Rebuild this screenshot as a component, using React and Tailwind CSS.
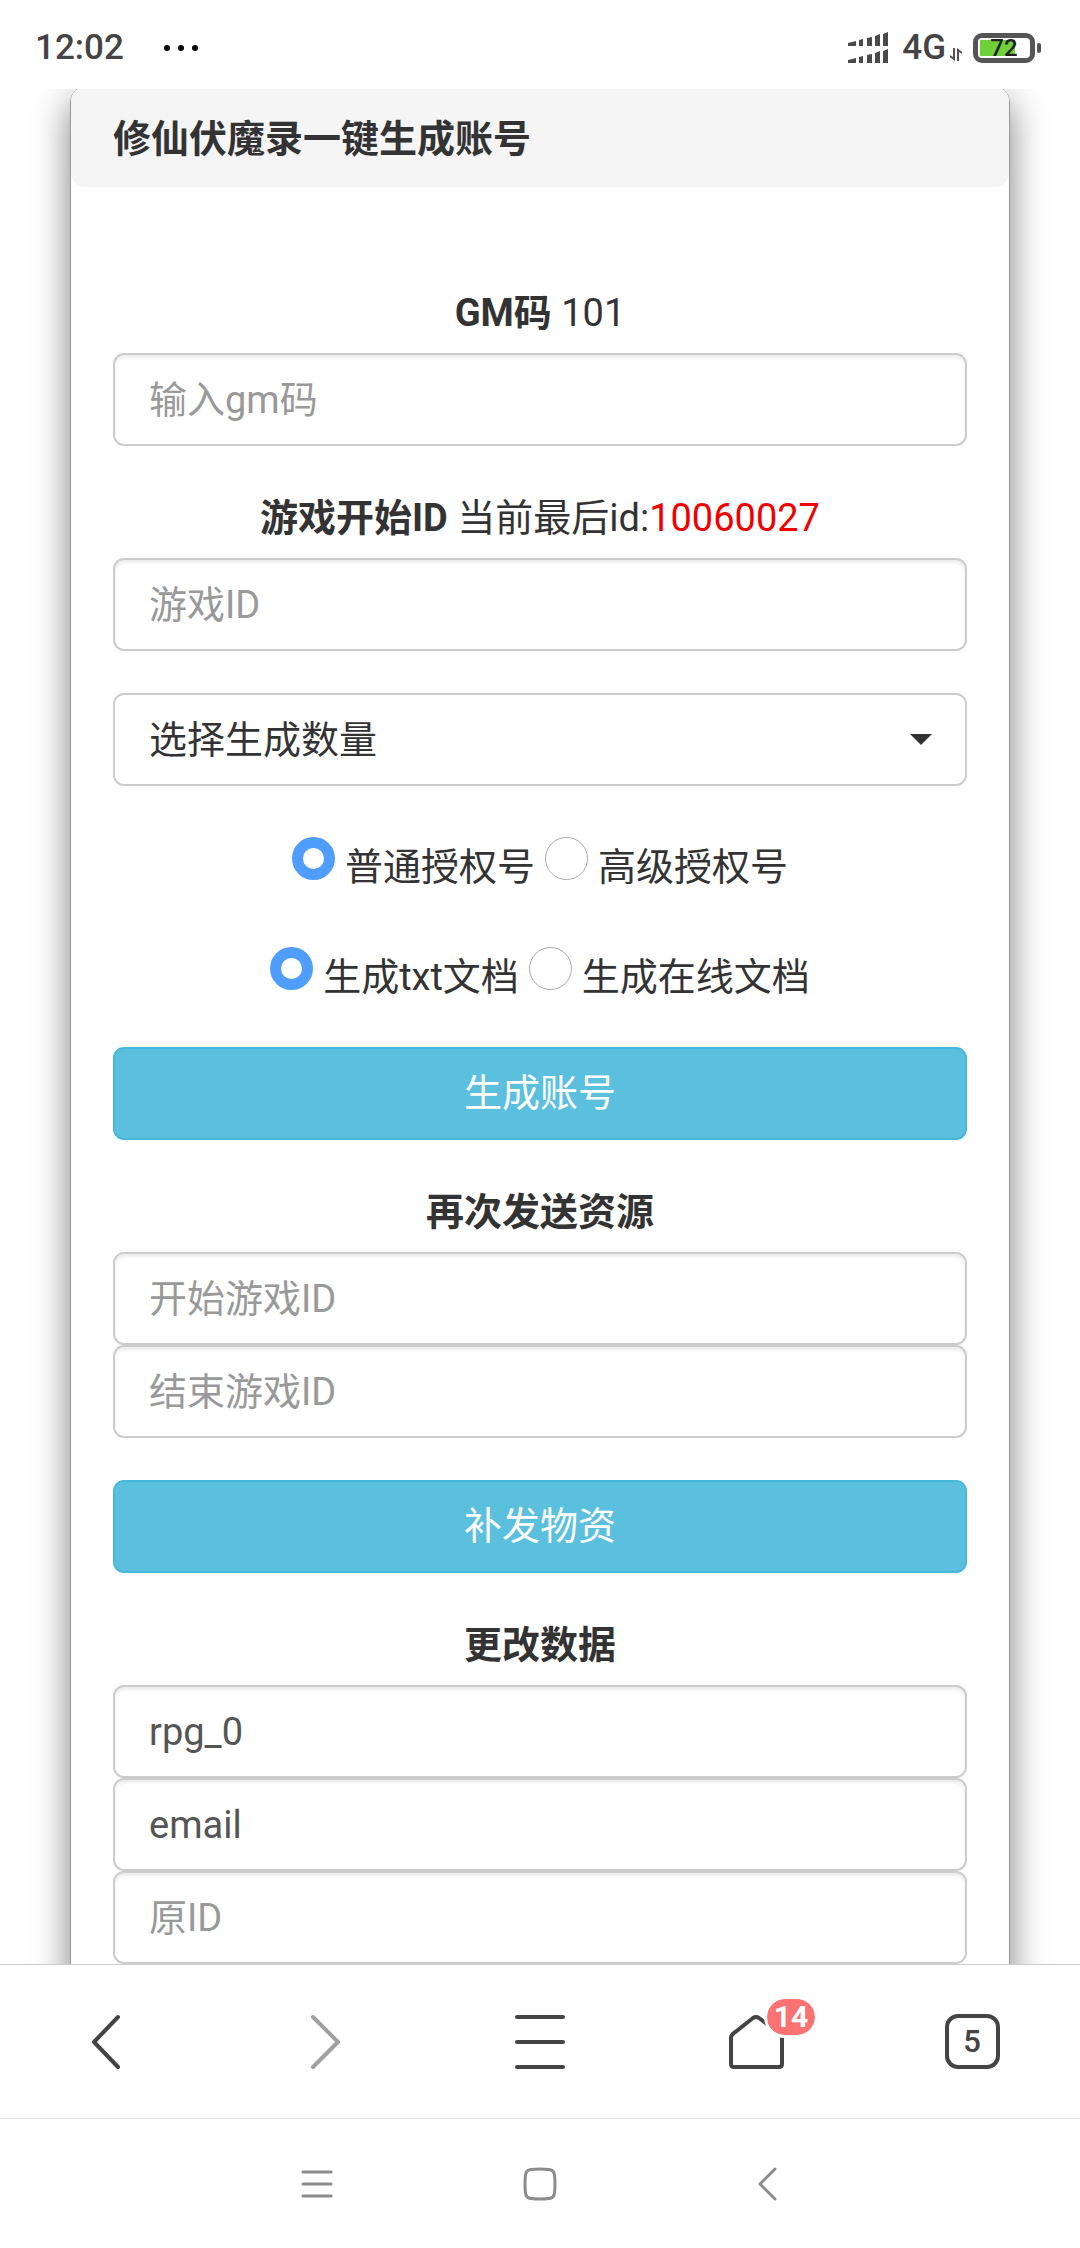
import React, { useState } from "react";

const field =
  "block h-[93px] w-full rounded-[11px] border-2 border-[#ccc] bg-white px-[34px] text-[38px] leading-[56px] text-[#555] shadow-[inset_0_3px_3px_rgba(0,0,0,0.075)] outline-none placeholder:text-[#999] placeholder:opacity-100";

function Heading({ children, ...props }) {
  return (
    <label className="mb-[12px] block pt-[2px] text-center text-[38px] leading-[56px]" {...props}>
      {children}
    </label>
  );
}

function PrimaryButton({ children }) {
  return (
    <button
      type="button"
      className="mt-[42px] block h-[93px] w-full rounded-[11px] border-2 border-[#46b8da] bg-[#5bc0de] text-[38px] text-white"
    >
      {children}
    </button>
  );
}

function RadioRow({ name, options, legend }) {
  const [value, setValue] = useState(options[0]);
  return (
    <div role="radiogroup" aria-label={legend} className="flex h-[68px] items-end justify-center gap-[10px]">
      {options.map((option) => (
        <label key={option} className="flex items-baseline gap-[10px] text-[38px] leading-[56px]">
          <input
            type="radio"
            name={name}
            checked={value === option}
            onChange={() => setValue(option)}
            className="size-[43px] shrink-0 appearance-none rounded-full border border-[#aaa] bg-white checked:border-[11px] checked:border-[#4f9dfd]"
          />
          {option}
        </label>
      ))}
    </div>
  );
}

function StatusBar() {
  return (
    <header className="flex h-[89px] shrink-0 items-center justify-between bg-white pt-[6px] pr-[39px] pl-[35px] text-[#444]">
      <div className="flex items-center gap-[40px]">
        <time className="text-[35px] leading-[42px] font-medium">12:02</time>
        <svg width="34" height="8" viewBox="0 0 34 8" aria-hidden="true">
          <circle cx="3" cy="4" r="3" />
          <circle cx="17" cy="4" r="3" />
          <circle cx="31" cy="4" r="3" />
        </svg>
      </div>
      <div className="flex items-center">
        <svg width="40" height="32" viewBox="0 0 40 32" fill="#4a4a4a" aria-hidden="true">
          <path d="M0 11 8 9v5H0zM11 8l4-1v7h-4zM19 6l5-1v9h-5zM27 4l5-2v12h-5zM35 2l5-2v14h-5z" />
          <path d="M0 28 8 26v5H0zM11 25l4-1v7h-4zM19 23l5-1v9h-5zM27 21l5-2v12h-5zM35 19l5-2v14h-5z" />
        </svg>
        <span className="ml-[14px] text-[35px] leading-[42px] font-medium">4G</span>
        <svg className="mt-[14px] ml-[4px]" width="12" height="13" viewBox="0 0 12 13" fill="none" stroke="#555" strokeWidth="2" aria-hidden="true">
          <path d="M4 0v11L0 8M8 13V2l4 3" />
        </svg>
        <div className="ml-[11px] flex h-[30px] w-[62px] items-center rounded-[9px] border-[5px] border-[#555] bg-[linear-gradient(#6fd03a,#6fd03a)] bg-[length:35px_16px] bg-[position:2px_2px] bg-no-repeat">
          <span className="w-full text-center text-[24px] leading-[20px] font-medium text-[#222]">72</span>
        </div>
        <span className="ml-[2px] h-[10px] w-[4px] rounded-sm bg-[#555]" />
      </div>
    </header>
  );
}

function NavBar() {
  const stroke = {
    fill: "none",
    stroke: "#444",
    strokeWidth: 4,
    strokeLinecap: "round",
    strokeLinejoin: "round",
    width: 56,
    height: 56,
    viewBox: "0 0 56 56",
  };
  return (
    <nav className="grid h-[154px] shrink-0 grid-cols-5 border-t border-[#ccc] bg-white">
      <button type="button" aria-label="后退" className="grid place-items-center">
        <svg {...stroke}><path d="M38 3 14 28 38 53" /></svg>
      </button>
      <button type="button" aria-label="前进" className="grid place-items-center">
        <svg {...stroke} stroke="#a0a0a0"><path d="M17 3 42 28 17 53" /></svg>
      </button>
      <button type="button" aria-label="菜单" className="grid place-items-center">
        <svg {...stroke}><path d="M5 3H51M5 28H51M5 53H51" /></svg>
      </button>
      <button type="button" aria-label="主页" className="grid place-items-center">
        <span className="relative">
          <svg {...stroke}>
            <path d="M25 4Q28 2 31 4L51 19Q54 21 54 24V50Q54 53 51 53H6Q3 53 3 50V24Q3 21 6 19Z" />
          </svg>
          <span className="absolute -top-[18px] left-[36px] flex h-[42px] w-[54px] items-center justify-center rounded-full border-[3px] border-white bg-[#fa7372] bg-clip-padding text-[30px] leading-[36px] font-bold text-white">
            14
          </span>
        </span>
      </button>
      <button type="button" aria-label="标签页" className="grid place-items-center">
        <span className="flex size-[55px] items-center justify-center rounded-[13px] border-4 border-[#444] text-[31px] leading-[40px] font-medium text-[#444]">
          5
        </span>
      </button>
    </nav>
  );
}

function SystemBar() {
  const stroke = {
    fill: "none",
    stroke: "#8c8c8c",
    strokeWidth: 3,
    strokeLinecap: "round",
    strokeLinejoin: "round",
    width: 34,
    height: 34,
    viewBox: "0 0 34 34",
  };
  return (
    <footer className="flex h-[130px] shrink-0 justify-center border-t border-[#e5e5e5] bg-white">
      <div className="grid w-[672px] grid-cols-3">
        <button type="button" aria-label="最近任务" className="grid place-items-center">
          <svg {...stroke}><path d="M4 5H32M4 17H32M4 29H32" /></svg>
        </button>
        <button type="button" aria-label="主屏幕" className="grid place-items-center">
          <svg {...stroke}><path d="M8 2.500Q17 1.500 26 2.500Q31 3 31.500 8Q32.500 17 31.500 26Q31 31 26 31.500Q17 32.500 8 31.500Q3 31 2.500 26Q1.500 17 2.500 8Q3 3 8 2.500Z" /></svg>
        </button>
        <button type="button" aria-label="返回" className="grid place-items-center">
          <svg {...stroke}><path d="M28 2 13 17 28 32" /></svg>
        </button>
      </div>
    </footer>
  );
}

export default function App() {
  return (
    <div className="flex h-screen flex-col bg-white font-[Roboto,'Noto_Sans_CJK_SC',sans-serif] text-[#333]">
      <StatusBar />
      <main className="min-h-0 flex-1 overflow-y-auto [scrollbar-width:none]">
        <section className="mx-[70px] -mt-[3px] rounded-[16px] border border-[#999] bg-white pb-[42px] shadow-[0_14px_36px_rgba(0,0,0,0.5)]">
          <h1 className="flex h-[100px] items-center rounded-[14px] bg-[#f5f5f5] px-[42px] pt-[4px] text-[38px] leading-[56px] font-bold">
            修仙伏魔录一键生成账号
          </h1>
          <form className="px-[42px] pt-[96px]">
            <Heading htmlFor="gm">
              <b>GM码</b> 101
            </Heading>
            <input id="gm" type="text" placeholder="输入gm码" className={field} />

            <div className="mt-[42px]">
              <Heading htmlFor="start-id">
                <b>游戏开始ID</b> 当前最后id:<span className="text-[#f00000]">10060027</span>
              </Heading>
              <input id="start-id" type="text" placeholder="游戏ID" className={field} />
            </div>

            <div className="relative mt-[42px]">
              <select
                aria-label="选择生成数量"
                className="block h-[93px] w-full appearance-none rounded-[11px] border-2 border-[#ccc] bg-white px-[34px] text-[38px] leading-[56px] text-[#333]"
              >
                <option>选择生成数量</option>
              </select>
              <svg className="pointer-events-none absolute top-[41px] right-[35px]" width="22" height="11" viewBox="0 0 22 11" fill="#333" aria-hidden="true">
                <path d="M0 0H22L11 11Z" />
              </svg>
            </div>

            <div className="mt-[41px] grid gap-[42px]">
              <RadioRow name="level" legend="授权类型" options={["普通授权号", "高级授权号"]} />
              <RadioRow name="output" legend="文档类型" options={["生成txt文档", "生成在线文档"]} />
            </div>

            <PrimaryButton>生成账号</PrimaryButton>

            <div className="mt-[42px]">
              <Heading htmlFor="resend-from">
                <b>再次发送资源</b>
              </Heading>
              <input id="resend-from" type="text" placeholder="开始游戏ID" className={field} />
              <input aria-label="结束游戏ID" type="text" placeholder="结束游戏ID" className={field} />
            </div>

            <PrimaryButton>补发物资</PrimaryButton>

            <div className="mt-[42px]">
              <Heading htmlFor="database">
                <b>更改数据</b>
              </Heading>
              <input id="database" type="text" defaultValue="rpg_0" className={field} />
              <input aria-label="字段" type="text" defaultValue="email" className={field} />
              <input aria-label="原ID" type="text" placeholder="原ID" className={field} />
            </div>
          </form>
        </section>
      </main>
      <NavBar />
      <SystemBar />
    </div>
  );
}
